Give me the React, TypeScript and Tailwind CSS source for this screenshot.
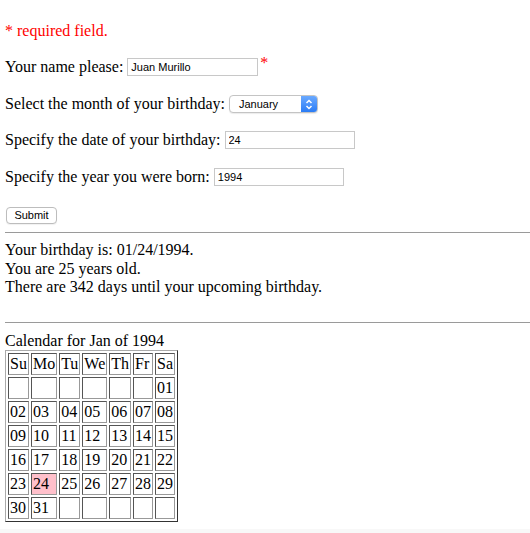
import React from "react";

const serif = { fontFamily: '"Liberation Serif", "Times New Roman", serif' };

const DAYS = ["Su", "Mo", "Tu", "We", "Th", "Fr", "Sa"];

// January 1994 starts on a Saturday.
const WEEKS: (string | null)[][] = [
  [null, null, null, null, null, null, "01"],
  ["02", "03", "04", "05", "06", "07", "08"],
  ["09", "10", "11", "12", "13", "14", "15"],
  ["16", "17", "18", "19", "20", "21", "22"],
  ["23", "24", "25", "26", "27", "28", "29"],
  ["30", "31", null, null, null, null, null],
];

function TextBox({ value, width }: { value: string; width: string }) {
  return (
    <input
      readOnly
      value={value}
      className={`${width} h-[18px] ml-[4px] border border-[#c8c8c8] bg-white px-[3px] text-[11px] text-black outline-none font-['Liberation_Sans',Arial,sans-serif]`}
    />
  );
}

function Cell({ children, hit }: { children?: React.ReactNode; hit?: boolean }) {
  return (
    <td
      className={`h-[22px] px-[1px] py-0 leading-[20px] border border-t-[#555] border-l-[#555] border-b-[#999] border-r-[#999] ${
        hit ? "bg-[#ffc0cb]" : "bg-white"
      }`}
    >
      {children}
    </td>
  );
}

export default function App() {
  return (
    <div className="min-h-[533px] bg-white text-black text-[16px] flex flex-col" style={serif}>
      <div className="pl-[5px] pt-[21px]">
        <div className="h-5 flex items-center text-[#ff0000]">* required field.</div>

        <div className="h-5 mt-[16px] flex items-center">
          <span>Your name please:</span>
          <TextBox value="Juan Murillo" width="w-[131px]" />
          <span className="text-[#ff0000] self-start -mt-[2px] ml-[2px] leading-[16px]">*</span>
        </div>

        <div className="h-5 mt-[17px] flex items-center">
          <span>Select the month of your birthday:</span>
          <div className="relative ml-[4px] w-[89px] h-[18px] rounded-[4px] border border-[#c4c4c4] bg-white shadow-[0_1px_1px_rgba(0,0,0,0.08)] overflow-hidden">
            <span className="absolute left-[9px] top-[1px] text-[11px] leading-[15px] font-['Liberation_Sans',Arial,sans-serif]">
              January
            </span>
            <span className="absolute right-0 top-0 bottom-0 w-[16px] bg-gradient-to-b from-[#6aa9ff] to-[#2a7cf5] flex items-center justify-center">
              <svg width="8" height="11" viewBox="0 0 8 11" fill="none" stroke="white" strokeWidth="1.5">
                <path d="M1.5 4L4 1.5L6.5 4" />
                <path d="M1.5 7L4 9.5L6.5 7" />
              </svg>
            </span>
          </div>
        </div>

        <div className="h-5 mt-[16px] flex items-center">
          <span>Specify the date of your birthday:</span>
          <TextBox value="24" width="w-[130px]" />
        </div>

        <div className="h-5 mt-[17px] flex items-center">
          <span>Specify the year you were born:</span>
          <TextBox value="1994" width="w-[130px]" />
        </div>

        <div className="h-5 mt-[18px] flex items-center">
          <button
            type="button"
            className="ml-[1px] w-[51px] h-[17px] rounded-[4px] border border-[#bdbdbd] bg-white text-[11px] leading-[15px] font-['Liberation_Sans',Arial,sans-serif] shadow-[0_1px_1px_rgba(0,0,0,0.06)]"
          >
            Submit
          </button>
        </div>
      </div>

      <hr className="mt-[7px] ml-[5px] border-0 border-t border-[#9a9a9a]" />

      <div className="pl-[5px] pt-[8px] leading-[18.5px]">
        <div>Your birthday is: 01/24/1994.</div>
        <div>You are 25 years old.</div>
        <div>There are 342 days until your upcoming birthday.</div>
      </div>

      <hr className="mt-[25px] ml-[5px] border-0 border-t border-[#9a9a9a]" />

      <div className="pl-[5px] pt-[8px]">
        <div className="leading-[19px]">Calendar for Jan of 1994</div>
        <table className="border-separate border-spacing-[2px] border border-t-[#aaa] border-l-[#aaa] border-b-[#333] border-r-[#333]">
          <tbody>
            <tr>
              {DAYS.map((d) => (
                <Cell key={d}>{d}</Cell>
              ))}
            </tr>
            {WEEKS.map((week, i) => (
              <tr key={i}>
                {week.map((day, j) => (
                  <Cell key={j} hit={day === "24"}>
                    {day}
                  </Cell>
                ))}
              </tr>
            ))}
          </tbody>
        </table>
      </div>

      <div className="mt-[7px] flex-1 bg-[#f8f8f8]" />
    </div>
  );
}
